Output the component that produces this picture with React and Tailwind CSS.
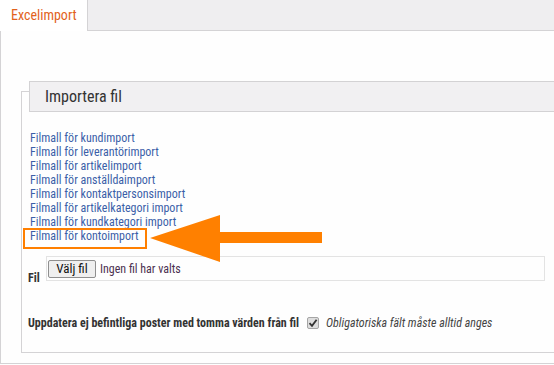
import React from "react";

const links = [
  "Filmall för kundimport",
  "Filmall för leverantörimport",
  "Filmall för artikelimport",
  "Filmall för anställdaimport",
  "Filmall för kontaktpersonsimport",
  "Filmall för artikelkategori import",
  "Filmall för kundkategori import",
  "Filmall för kontoimport",
];

export default function App() {
  return (
    <div className="relative w-[554px] h-[365px] overflow-hidden bg-[#fefefe] font-['Roboto',sans-serif] [font-stretch:82%] text-[#333]">
      {/* tab bar */}
      <div className="flex h-[31px] bg-[#efeef0]">
        <div className="w-[88px] bg-white border-r border-[#d4d3d5] pl-[11px] pt-[6px] text-[14px] leading-[18px] text-[#e2621b] [font-stretch:86%]">
          Excelimport
        </div>
        <div className="flex-1 border-b border-[#d4d3d5]" />
      </div>

      {/* content */}
      <div className="h-[333px] border-l border-b border-[#d4d3d5] pt-[60px] pl-[20px]">
        <div className="w-[560px] h-[262px] border-l border-t border-b border-[#d4d3d5]">
          <div className="mt-[-11px] ml-[7px] h-[31px] border border-[#d3d2d4] bg-[#f1f0f2] pl-[15px] text-[16px] leading-[29px] text-[#333]">
            Importera fil
          </div>

          <div className="mt-[19px] pl-[8px] flex flex-col">
            {links.map((l) => (
              <a key={l} className="text-[12px] leading-[14px] text-[#3b5ea8] w-fit cursor-pointer">
                {l}
              </a>
            ))}
          </div>

          <div className="mt-[13px] flex items-end pl-[6px]">
            <div className="w-[18px] text-[12px] font-bold leading-[14px] mb-[-4px]">Fil</div>
            <div className="w-[499px] h-[25px] border border-[#e3e3e3] flex items-center pl-[1px]">
              <button className="h-[18px] w-[48px] border border-[#8f8f8f] rounded-[2px] bg-[#efefef] text-[13px] leading-[16px] text-[#111]">
                Välj fil
              </button>
              <span className="ml-[4px] text-[12px] text-[#4b3050]">Ingen fil har valts</span>
            </div>
          </div>

          <div className="mt-[35px] pl-[6px] flex items-center">
            <span className="text-[12px] font-bold leading-[14px] text-[#333]">
              Uppdatera ej befintliga poster med tomma värden från fil
            </span>
            <span className="ml-[8px] w-[12px] h-[12px] border border-[#a5a5a5] rounded-[2px] bg-[#dedede] flex items-center justify-center">
              <svg width="10" height="10" viewBox="0 0 10 10">
                <path d="M1.5 5.2 L4 7.8 L8.6 1.8" fill="none" stroke="#333" strokeWidth="1.8" />
              </svg>
            </span>
            <span className="ml-[7px] text-[12px] italic leading-[14px] text-[#444]">
              Obligatoriska fält måste alltid anges
            </span>
          </div>
        </div>
      </div>

      {/* highlight overlay */}
      <div className="absolute left-[23px] top-[228px] w-[124px] h-[21px] border-[2.5px] border-[#ff7f00]" />
      <svg className="absolute left-0 top-0" width="554" height="365" viewBox="0 0 554 365">
        <polygon points="150,238 220,215 220,232 322,232 322,243 220,243 220,262" fill="#ff8000" />
      </svg>
    </div>
  );
}
